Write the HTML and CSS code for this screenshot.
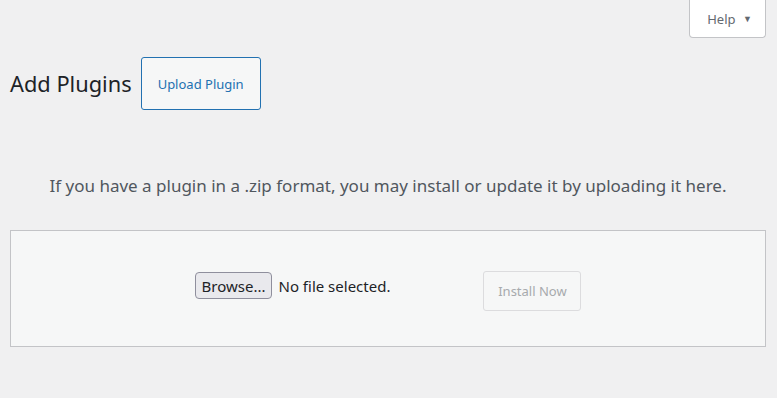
FILE: index.html
```html
<!DOCTYPE html>
<html lang="en">
  <head>
    <meta charset="UTF-8" />
    <meta name="viewport" content="width=device-width, initial-scale=1.0" />
    <title>Add Plugins</title>
    <link rel="stylesheet" href="styles.css">
  </head>
  <body>
    <div class="screen-meta-links">
      <button type="button" class="help-button">Help <span class="arrow">&#9660;</span></button>
    </div>
    <div class="wrap">
      <div class="page-heading">
        <h1>Add Plugins</h1>
        <button type="button" class="upload-button">Upload Plugin</button>
      </div>
      <p class="install-help">If you have a plugin in a .zip format, you may install or update it by uploading it here.</p>
      <form class="upload-form">
        <div class="file-field">
          <button type="button" class="browse-button">Browse...</button>
          <span class="file-name">No file selected.</span>
        </div>
        <button type="button" class="install-button" disabled>Install Now</button>
      </form>
    </div>
  </body>
</html>
```

FILE: styles.css
```css
body {
  margin: 0;
  padding: 0;
  background-color: #f0f0f1;
  font-family: "Noto Sans", "Open Sans", sans-serif;
  color: #1d2327;
}

button {
  font-family: inherit;
}

.screen-meta-links {
  display: flex;
  justify-content: flex-end;
  padding-right: 11px;
}

.help-button {
  width: 77px;
  height: 38px;
  background-color: #fff;
  border: 1px solid #c3c4c7;
  border-top: none;
  border-radius: 0 0 4px 4px;
  color: #646970;
  font-size: 13px;
  padding: 0 0 0 4px;
}

.help-button .arrow {
  font-size: 9px;
  margin-left: 4px;
  vertical-align: 2px;
}

.wrap {
  margin: 0 11px 0 10px;
}

.page-heading {
  display: flex;
  align-items: center;
  gap: 9px;
  margin-top: 19px;
}

h1 {
  font-size: 21.8px;
  font-weight: 400;
  margin: 0;
}

.upload-button {
  width: 120px;
  height: 53px;
  background-color: #f6f7f7;
  border: 1px solid #2271b1;
  border-radius: 3px;
  color: #2271b1;
  font-size: 13px;
}

.install-help {
  margin: 0;
  padding-top: 64px;
  text-align: center;
  font-size: 17px;
  color: #50575e;
}

.upload-form {
  display: flex;
  justify-content: center;
  align-items: flex-start;
  gap: 93px;
  margin-top: 33px;
  height: 75px;
  padding-top: 40px;
  background-color: #f6f7f7;
  border: 1px solid #c3c4c7;
}

.file-field {
  display: flex;
  align-items: center;
  gap: 6px;
  padding-top: 1px;
  font-size: 15px;
}

.browse-button {
  height: 27px;
  padding: 0 6px;
  background-color: #e9e9ed;
  border: 1px solid #8f8f9d;
  border-radius: 4px;
  color: #1d2327;
  font-size: 15px;
}

.file-name {
  color: #1d2327;
}

.install-button {
  width: 98px;
  height: 40px;
  background-color: #f6f7f7;
  border: 1px solid #dcdcde;
  border-radius: 3px;
  color: #a7aaad;
  font-size: 13px;
}
```
